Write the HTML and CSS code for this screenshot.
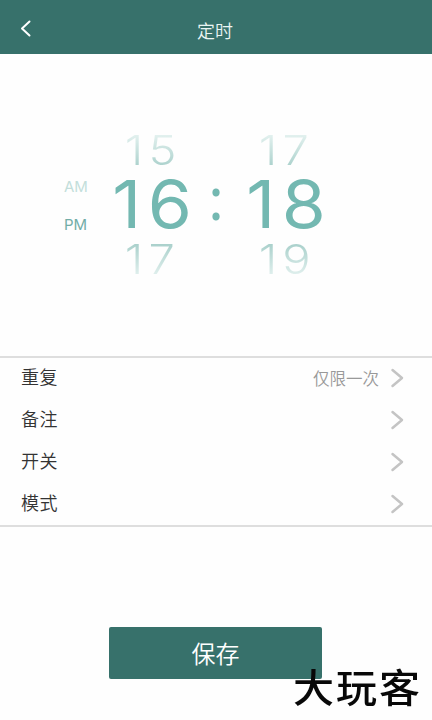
FILE: index.html
```
<!DOCTYPE html>
<html lang="zh-CN">
<head>
<meta charset="utf-8">
<title>定时</title>
<link rel="stylesheet" href="styles.css">
</head>
<body>
<div class="screen">
  <header class="bar">
    <svg class="back" width="12" height="18" viewBox="0 0 12 18"><path d="M9.5 2.5 2 9.5l7.500 7"/></svg>
    <h1 class="title">定时</h1>
  </header>
  <section class="picker">
    <div class="period"><span class="am">AM</span><span class="pm">PM</span></div>
    <div class="wheel">
      <span class="near prev">15</span><span class="now">16</span><span class="near next">17</span>
    </div>
    <span class="colon">:</span>
    <div class="wheel">
      <span class="near prev">17</span><span class="now">18</span><span class="near next">19</span>
    </div>
  </section>
  <ul class="list">
    <li class="row"><span class="label">重复</span><span class="value">仅限一次</span><svg class="arrow" width="14" height="20" viewBox="0 0 14 20"><path d="M2.500 2 12 10 2.500 18"/></svg></li>
    <li class="row"><span class="label">备注</span><svg class="arrow" width="14" height="20" viewBox="0 0 14 20"><path d="M2.500 2 12 10 2.500 18"/></svg></li>
    <li class="row"><span class="label">开关</span><svg class="arrow" width="14" height="20" viewBox="0 0 14 20"><path d="M2.500 2 12 10 2.500 18"/></svg></li>
    <li class="row"><span class="label">模式</span><svg class="arrow" width="14" height="20" viewBox="0 0 14 20"><path d="M2.500 2 12 10 2.500 18"/></svg></li>
  </ul>
  <button class="save">保存</button>
  <div class="watermark">大玩客</div>
</div>
</body>
</html>
```
FILE: styles.css
```
* { box-sizing: border-box; }
body { margin: 0; background: #fefefe; font-family: "Noto Sans CJK SC", sans-serif; }
.screen { position: relative; width: 432px; height: 720px; overflow: hidden; }
.bar { display: grid; grid-template-columns: 60px 1fr 60px; align-items: center; height: 54px; padding-top: 5px; background: #37716b; }
.back { margin: -3px 0 0 20px; fill: none; stroke: #fff; stroke-width: 2; stroke-linecap: round; stroke-linejoin: round; }
.title { margin: 0 0 0 -2px; color: #eaf5f3; font-size: 18px; font-weight: 350; line-height: 26px; text-align: center; }
.picker { display: grid; grid-template-columns: 40px 100px 32px 104px; height: 302px; padding: 74px 0 0 60px; font-family: Inter, sans-serif; }
.period { display: flex; flex-direction: column; gap: 18px; padding: 49px 0 0 4px; font-size: 15px; line-height: 20px; }
.am { color: #c3dedb; }
.pm { color: #72ada7; }
.wheel { display: flex; flex-direction: column; align-items: center; }
.near { height: 44px; padding-left: 5px; font-size: 41px; font-weight: 340; line-height: 44px; letter-spacing: 4.5px; color: transparent; background-clip: text; -webkit-background-clip: text; transform: scaleX(1.15); }
.prev { background-image: linear-gradient(#e3f1ef 15%, #a9d0cb 90%); }
.next { background-image: linear-gradient(#a9d0cb 15%, #e3f1ef 90%); }
.now { height: 65px; padding-left: 10px; color: #73b8b1; font-size: 66px; font-weight: 370; line-height: 65px; letter-spacing: 6px; transform: scaleX(1.08); }
.colon { padding-top: 37px; color: #73b8b1; font-family: "Noto Sans", sans-serif; font-size: 58px; line-height: 65px; text-align: center; }
.list { height: 171px; margin: 0; padding: 0; list-style: none; border-top: 2px solid #dedede; border-bottom: 2px solid #dedede; }
.row { display: flex; align-items: center; height: 42px; padding: 0 28px 0 21px; }
.label { margin-top: -7px; color: #333; font-size: 18px; font-weight: 350; line-height: 26px; letter-spacing: .5px; }
.value { margin: -2px 11px 0 auto; color: #999; font-size: 16.5px; font-weight: 350; line-height: 24px; }
.arrow { flex: none; margin: -2px 0 0 auto; fill: none; stroke: #c4c4c4; stroke-width: 2.5; stroke-linecap: round; stroke-linejoin: round; }
.value + .arrow { margin-left: 0; }
.save { display: block; width: 213px; height: 52px; margin: 100px 0 0 109px; padding: 0; border: 0; border-radius: 2px; background: #37716b; color: #fff; font: 350 24px/50px "Noto Sans CJK SC", sans-serif; }
.watermark { position: absolute; left: 293px; top: 657px; color: #080808; font-size: 41px; font-weight: 500; line-height: 56px; letter-spacing: 2px; white-space: nowrap; transform: scaleY(.93); }
```
